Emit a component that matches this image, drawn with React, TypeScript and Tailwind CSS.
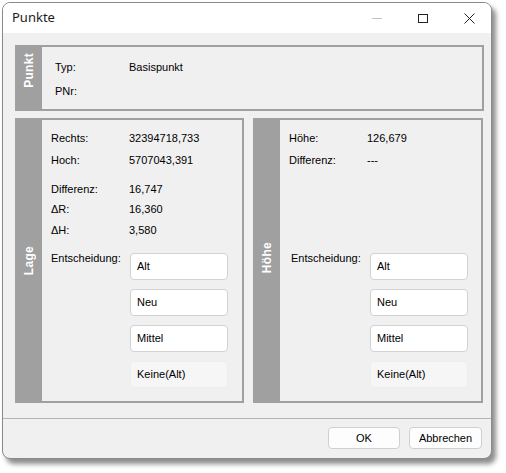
import React from 'react';

const font = { fontFamily: '"Liberation Sans", Arial, sans-serif' };

// Vertical gray caption strip on the left of each group
function Strip({ label, className = '' }: { label: string; className?: string }) {
  return (
    <div className={`w-[27px] shrink-0 bg-[#a0a0a0] flex flex-col items-center justify-center ${className}`}>
      <span className="[writing-mode:vertical-rl] rotate-180 text-white font-bold text-[12px] leading-none tracking-[0.3px]">
        {label}
      </span>
    </div>
  );
}

function Row({ label, value, h, w = 'w-[78px]' }: { label: string; value?: string; h: string; w?: string }) {
  return (
    <div className={`flex ${h} leading-[14px]`}>
      <span className={`${w} shrink-0`}>{label}</span>
      <span>{value}</span>
    </div>
  );
}

function Decision({ labelW }: { labelW: string }) {
  const opts = ['Alt', 'Neu', 'Mittel'];
  return (
    <div className="flex">
      <span className={`${labelW} shrink-0 leading-[14px]`}>Entscheidung:</span>
      <div className="mt-[2px] flex flex-col gap-[9px]">
        {opts.map((o) => (
          <div
            key={o}
            className="w-[98px] h-[27px] flex items-center px-[6px] bg-white border border-[#d2d2d2] rounded-[4px]"
          >
            {o}
          </div>
        ))}
        <div className="w-[98px] h-[27px] flex items-center px-[6px] bg-[#f6f6f6] border border-[#eeeeee] rounded-[4px]">
          Keine(Alt)
        </div>
      </div>
    </div>
  );
}

export default function App() {
  return (
    <div className="w-[506px] h-[473px] bg-white text-[11px] text-black" style={font}>
      <div className="ml-[2px] mt-[2px] w-[490px] h-[457px] border border-[#8a8a8a] rounded-[8px] overflow-hidden flex flex-col bg-[#f0f0f0] shadow-[4px_5px_5px_rgba(0,0,0,0.45)]">
        {/* title bar */}
        <div className="h-[30px] shrink-0 bg-white flex items-center">
          <span className="ml-[9px] text-[13px] text-[#1a1a1a]" style={{ fontFamily: '"Segoe UI", "Noto Sans", sans-serif' }}>
            Punkte
          </span>
          <div className="ml-auto flex items-center h-full">
            <div className="w-[46px] h-full flex items-center justify-center">
              <div className="w-[10px] h-px bg-[#c4c4c4]" />
            </div>
            <div className="w-[46px] h-full flex items-center justify-center">
              <div className="w-[10px] h-[9px] border border-[#222]" />
            </div>
            <div className="w-[46px] h-full flex items-center justify-center mr-[-1px]">
              <svg width="11" height="11" viewBox="0 0 11 11">
                <path d="M0.5 0.5 L10.5 10.5 M10.5 0.5 L0.5 10.5" stroke="#222" strokeWidth="1" />
              </svg>
            </div>
          </div>
        </div>

        {/* body */}
        <div className="flex-1 flex flex-col pl-[12px] pr-[7px] pt-[12px]">
          {/* Punkt */}
          <div className="flex h-[66px]">
            <Strip label="Punkt" className="pb-[16px]" />
            <div className="flex-1 border-y-2 border-r-2 border-[#a0a0a0] pl-[13px] pt-[13px]">
              <Row label="Typ:" value="Basispunkt" h="h-[24px]" w="w-[74px]" />
              <Row label="PNr:" h="h-[14px]" w="w-[74px]" />
            </div>
          </div>

          <div className="mt-[7px] flex gap-[9px] h-[285px]">
            {/* Lage */}
            <div className="flex w-[229px]">
              <Strip label="Lage" />
              <div className="flex-1 border-y-2 border-r-2 border-[#a0a0a0] pl-[9px] pt-[11px]">
                <Row label="Rechts:" value="32394718,733" h="h-[22px]" />
                <Row label="Hoch:" value="5707043,391" h="h-[29px]" />
                <Row label="Differenz:" value="16,747" h="h-[20px]" />
                <Row label="ΔR:" value="16,360" h="h-[21px]" />
                <Row label="ΔH:" value="3,580" h="h-[28px]" />
                <Decision labelW="w-[79px]" />
              </div>
            </div>

            {/* Höhe */}
            <div className="flex w-[230px]">
              <Strip label="Höhe" className="pb-[6px]" />
              <div className="flex-1 border-y-2 border-r-2 border-[#a0a0a0] pl-[9px] pt-[11px]">
                <Row label="Höhe:" value="126,679" h="h-[22px]" />
                <Row label="Differenz:" value="---" h="h-[98px]" />
                <div className="pl-[2px]">
                  <Decision labelW="w-[79px]" />
                </div>
              </div>
            </div>
          </div>
        </div>

        {/* footer */}
        <div className="h-[40px] shrink-0 border-t border-[#b4b4b4] flex items-start justify-end gap-[9px] pt-[8px] pr-[9px] mt-[14px]">
          <div className="w-[72px] h-[22px] flex items-center justify-center bg-[#fdfdfd] border border-[#d0d0d0] rounded-[4px]">
            OK
          </div>
          <div className="w-[73px] h-[22px] flex items-center justify-center bg-[#fdfdfd] border border-[#d0d0d0] rounded-[4px]">
            Abbrechen
          </div>
        </div>
      </div>
    </div>
  );
}
